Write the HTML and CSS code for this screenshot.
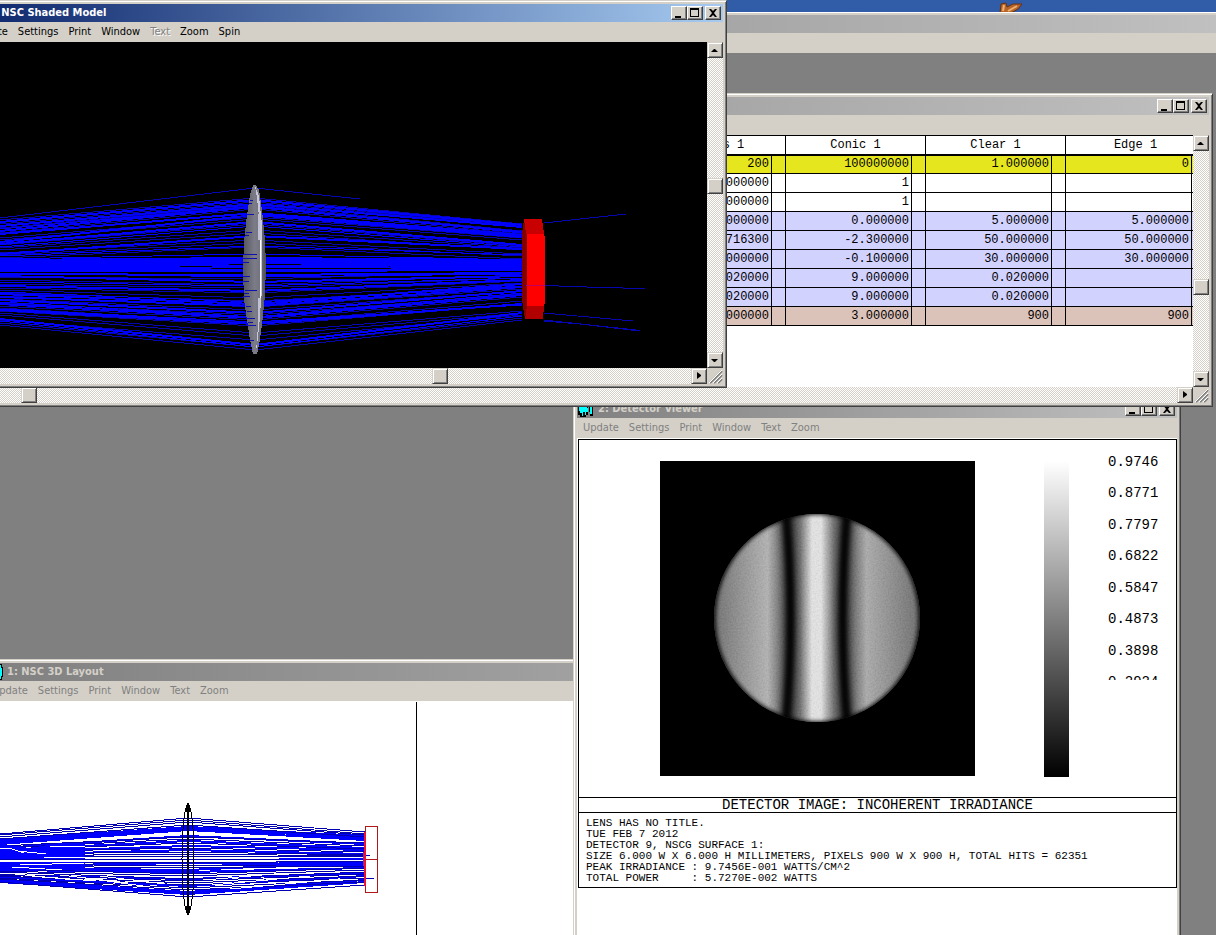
FILE: index.html
```
<!DOCTYPE html>
<html lang="en">
<head>
<meta charset="utf-8">
<title>NSC Shaded Model</title>
<link rel="stylesheet" href="styles.css">
</head>
<body>
<svg class="pointer" viewBox="0 0 24 11" width="24" height="11">
  <path d="M1 12L2 3L7 2L8 6L14 3L23 3L19 8L12 12Z" fill="#b5652a" stroke="#6b3010"/>
  <path d="M4 10L5 4M9 10L18 5" stroke="#f0b070" stroke-width="2" fill="none"/>
</svg>

<div class="app">
  <div class="titlebar idle"></div>
  <div class="menubar"></div>
</div>

<!-- 1: layout -->
<section class="window layout">
  <div class="titlebar idle">
    <svg class="icon" viewBox="0 0 16 16" width="16" height="16"><path d="M1 0H15V3H16V13H15V16H1Z" fill="#000"/><path d="M2 1H14V4H15V12H14V15H2Z" fill="#0ff"/></svg>
    <h2>1: NSC 3D Layout</h2>
  </div>
  <nav class="menubar off"><button>Update</button><button>Settings</button><button>Print</button><button>Window</button><button>Text</button><button>Zoom</button></nav>
  <svg class="paper" viewBox="-14 701 1158 234" width="1158" height="234" shape-rendering="crispEdges" fill="none">
    <path stroke="#00f" stroke-width="2" d="M0 842L188 828L365 838M0 844L188 830L365 840M0 848L188 836L365 844M0 850L188 841L365 848M0 852L188 846L365 850M0 866L188 863L365 864M0 868L188 870L365 862M0 870L188 872L365 868M0 875L188 879L365 873M0 877L188 886L365 876M0 880L188 892L365 880M0 882L188 894L365 882M0 840L188 827L365 836M0 855L188 850L365 854"/>
    <path stroke="#0000b0" d="M0 834L188 818L365 832M0 835L188 820L365 834M0 837L188 822L365 835M0 839L188 825L365 837M0 846L188 837L365 843M0 848L188 839L365 846M0 850L188 843L365 849M0 852L188 848L365 852M0 854L188 852L365 855M0 856L188 854L365 856M0 857L188 856L365 857M0 859L188 859L365 859M0 862L188 863L365 861M0 864L188 866L365 864M0 866L188 868L365 866M0 869L188 874L365 868M0 871L188 876L365 870M0 872L188 879L365 872M0 874L188 881L365 874M0 875L188 883L365 876M0 876L188 885L365 878M0 878L188 888L365 880M0 879L188 890L365 882M0 882L188 897L365 885M352 855H370M365 878H374"/>
    <path fill="#00f" d="M0 844L30 848L60 843L85 843V859H0ZM0 862H85V868L60 870H0ZM279 858H365V860H279ZM279 862H365V866H279ZM222 863H335V865H222Z"/>
    <path stroke="#fff" d="M0 848L12 849L24 853M18 851L46 854M44 857H85M50 846H85M2 861H85M20 865L85 863M12 867L62 870M15 874L75 880M32 876L96 881M60 875L128 883M85 878L150 887M100 876L165 884M205 880L285 873M212 885L310 876M230 889L340 879"/>
    <ellipse cx="188" cy="859" rx="6" ry="54" stroke="#000"/>
    <path stroke="#000" stroke-width="2" d="M188 803V915"/>
    <path stroke="#000" stroke-width="4" d="M188 805V812M188 906V913"/>
    <path stroke="#b01818" d="M365.500 826.500H377.500V892.500H365.500ZM365.500 859.500H377.500"/>
    <path stroke="#f01030" stroke-width="2" d="M365 832V886"/>
    <path stroke="#803090" d="M363.500 852V866"/>
    <path stroke="#000" d="M416.500 702V935"/>
  </svg>
</section>

<!-- 2: detector viewer -->
<section class="window detector">
  <div class="titlebar idle">
    <svg class="icon" viewBox="0 0 16 16" width="16" height="16"><path d="M0 1H10V14H8V16H2V14H0ZM11 1H15V15H12V11H11Z" fill="#000"/><path d="M1 2H9V7H10V11H8V14H7V11H5V15H4V12H2V10H1ZM12 2H14V13H12Z" fill="#0ff"/></svg>
    <h2>2: Detector Viewer</h2>
    <button class="cap" aria-label="Minimize"><svg viewBox="0 0 14 12"><path d="M3 9H9V11H3Z"/></svg></button>
    <button class="cap" aria-label="Maximize"><svg viewBox="0 0 14 12"><path fill-rule="evenodd" d="M2 1H11V10H2ZM3 3H10V9H3Z"/></svg></button>
    <button class="cap close" aria-label="Close"><svg viewBox="0 0 14 12"><path d="M3 2H5L7 4L9 2H11L8 6L11 10H9L7 8L5 10H3L6 6Z"/></svg></button>
  </div>
  <nav class="menubar off"><button>Update</button><button>Settings</button><button>Print</button><button>Window</button><button>Text</button><button>Zoom</button></nav>
  <div class="report">
    <div class="sheet">
      <div class="plot">
        <svg class="image" viewBox="660 461 315 315" width="315" height="315">
          <defs>
            <clipPath id="disc"><ellipse cx="817" cy="618" rx="103" ry="104"/></clipPath>
            <linearGradient id="beam" gradientUnits="userSpaceOnUse" x1="714" x2="920" y1="0" y2="0">
              <stop offset="0" stop-color="#686868"/><stop offset=".26" stop-color="#b0b0b0"/>
              <stop offset=".37" stop-color="#303030"/><stop offset=".42" stop-color="#686868"/>
              <stop offset=".475" stop-color="#e6e6e6"/><stop offset=".52" stop-color="#e6e6e6"/>
              <stop offset=".58" stop-color="#686868"/><stop offset=".63" stop-color="#303030"/>
              <stop offset=".74" stop-color="#a8a8a8"/><stop offset="1" stop-color="#646464"/>
            </linearGradient>
            <filter id="soft" x="-100%" width="300%"><feGaussianBlur stdDeviation="4 1"/></filter>
            <filter id="core" x="-100%" width="300%"><feGaussianBlur stdDeviation="2 1"/></filter>
            <filter id="rim"><feGaussianBlur stdDeviation="2"/></filter>
            <filter id="grain"><feTurbulence type="fractalNoise" baseFrequency=".6" numOctaves="2"/><feColorMatrix values="1 0 0 0 0 1 0 0 0 0 1 0 0 0 0 0 0 0 0 .16"/></filter>
          </defs>
          <rect x="660" y="461" width="315" height="315"/>
          <g clip-path="url(#disc)">
            <rect x="714" y="514" width="206" height="208" fill="url(#beam)"/>
            <rect x="714" y="514" width="206" height="208" filter="url(#grain)"/>
            <g fill="none" stroke="#000" stroke-width="8" filter="url(#soft)">
              <path d="M785 505Q796 618 785 731"/><path d="M848 505Q837 618 848 731"/>
            </g>
            <g fill="none" stroke="#000" stroke-width="5" filter="url(#core)">
              <path d="M785 505Q796 618 785 731"/><path d="M848 505Q837 618 848 731"/>
            </g>
            <ellipse cx="817" cy="618" rx="104" ry="106" fill="none" stroke="#000" stroke-width="5" filter="url(#rim)"/>
          </g>
        </svg>
        <div class="scale"></div>
        <ol class="levels"><li>0.9746<li>0.8771<li>0.7797<li>0.6822<li>0.5847<li>0.4873<li>0.3898<li>0.2924</ol>
      </div>
      <h3>DETECTOR IMAGE: INCOHERENT IRRADIANCE</h3>
<pre>LENS HAS NO TITLE.
TUE FEB 7 2012
DETECTOR 9, NSCG SURFACE 1:
SIZE 6.000 W X 6.000 H MILLIMETERS, PIXELS 900 W X 900 H, TOTAL HITS = 62351
PEAK IRRADIANCE : 9.7456E-001 WATTS/CM^2
TOTAL POWER     : 5.7270E-002 WATTS</pre>
    </div>
  </div>
</section>

<!-- component editor -->
<section class="window editor">
  <div class="titlebar idle">
    <h2></h2>
    <button class="cap" aria-label="Minimize"><svg viewBox="0 0 14 12"><path d="M3 9H9V11H3Z"/></svg></button>
    <button class="cap" aria-label="Maximize"><svg viewBox="0 0 14 12"><path fill-rule="evenodd" d="M2 1H11V10H2ZM3 3H10V9H3Z"/></svg></button>
    <button class="cap close" aria-label="Close"><svg viewBox="0 0 14 12"><path d="M3 2H5L7 4L9 2H11L8 6L11 10H9L7 8L5 10H3L6 6Z"/></svg></button>
  </div>
  <div class="menubar"></div>
  <div class="scroller">
    <div class="grid">
      <table>
        <colgroup><col class="num"><col class="flag"><col class="num"><col class="flag"><col class="num"><col class="flag"><col class="num"><col class="flag"></colgroup>
        <thead><tr><th colspan="2">Radius 1</th><th colspan="2">Conic 1</th><th colspan="2">Clear 1</th><th colspan="2">Edge 1</th></tr></thead>
        <tbody>
        <tr class="yellow"><td>200</td><td></td><td>100000000</td><td></td><td>1.000000</td><td></td><td>0</td><td></td></tr>
        <tr><td>0.000000</td><td></td><td>1</td><td></td><td></td><td></td><td></td><td></td></tr>
        <tr><td>0.000000</td><td></td><td>1</td><td></td><td></td><td></td><td></td><td></td></tr>
        <tr class="blue"><td>0.000000</td><td></td><td>0.000000</td><td></td><td>5.000000</td><td></td><td>5.000000</td><td></td></tr>
        <tr class="blue"><td>0.716300</td><td></td><td>-2.300000</td><td></td><td>50.000000</td><td></td><td>50.000000</td><td></td></tr>
        <tr class="blue"><td>0.000000</td><td></td><td>-0.100000</td><td></td><td>30.000000</td><td></td><td>30.000000</td><td></td></tr>
        <tr class="blue"><td>0.020000</td><td></td><td>9.000000</td><td></td><td>0.020000</td><td></td><td></td><td></td></tr>
        <tr class="blue"><td>0.020000</td><td></td><td>9.000000</td><td></td><td>0.020000</td><td></td><td></td><td></td></tr>
        <tr class="rose"><td>0.000000</td><td></td><td>3.000000</td><td></td><td>900</td><td></td><td>900</td><td></td></tr>
        </tbody>
      </table>
    </div>
    <div class="bar down">
      <button aria-label="Scroll up"><svg viewBox="0 0 14 14"><path d="M3 9H10L7 6H6Z"/></svg></button><i class="thumb"></i>
      <button aria-label="Scroll down"><svg viewBox="0 0 14 14"><path d="M3 6H10L7 9H6Z"/></svg></button>
    </div>
    <div class="bar across">
      <button aria-label="Scroll left"><svg viewBox="0 0 14 14"><path d="M8 3V10L5 7V6Z"/></svg></button><i class="thumb"></i>
      <button aria-label="Scroll right"><svg viewBox="0 0 14 14"><path d="M5 3V10L9 7V6Z"/></svg></button>
    </div>
    <svg class="grip" viewBox="0 0 16 16" width="16" height="16"><path d="M3 15L15 3M7 15L15 7M11 15L15 11" stroke="#808080" stroke-width="2"/><path d="M2 15L15 2M6 15L15 6M10 15L15 10" stroke="#fff"/></svg>
  </div>
</section>

<!-- 3: shaded model -->
<section class="window shaded">
  <div class="titlebar">
    <svg class="icon" viewBox="0 0 16 16" width="16" height="16"><path d="M1 1H15V15H1Z" fill="#0ff"/></svg>
    <h2>3: NSC Shaded Model</h2>
    <button class="cap" aria-label="Minimize"><svg viewBox="0 0 14 12"><path d="M3 9H9V11H3Z"/></svg></button>
    <button class="cap" aria-label="Maximize"><svg viewBox="0 0 14 12"><path fill-rule="evenodd" d="M2 1H11V10H2ZM3 3H10V9H3Z"/></svg></button>
    <button class="cap close" aria-label="Close"><svg viewBox="0 0 14 12"><path d="M3 2H5L7 4L9 2H11L8 6L11 10H9L7 8L5 10H3L6 6Z"/></svg></button>
  </div>
  <nav class="menubar"><button>Update</button><button>Settings</button><button>Print</button><button>Window</button><button disabled>Text</button><button>Zoom</button><button>Spin</button></nav>
  <div class="scroller">
    <svg class="scene" viewBox="-34 42 741 326" width="741" height="326" shape-rendering="crispEdges" fill="none">
      <defs>
        <linearGradient id="glass"><stop offset="0" stop-color="#55555f"/><stop offset=".5" stop-color="#7c7c88"/><stop offset=".75" stop-color="#747480"/><stop offset="1" stop-color="#4c4c54"/></linearGradient>
      </defs>
      <path stroke="#0606b0" stroke-width="1" d="M0 218L255 188L360 199M0 220L255 198L522 224M0 224L255 202L522 226M0 228L255 205L522 231M0 233L255 209L522 234M0 238L255 217L522 238M0 240L255 219L522 240M0 245L255 224L522 246M0 248L255 230L522 248M0 250L255 233L522 250M0 253L255 240L522 254M0 255L255 243L522 256M0 258L255 247L522 259M0 277L255 279L522 272M0 280L255 285L522 275M0 284L255 288L522 278M0 288L255 293L522 281M0 290L255 298L522 283M0 293L255 301L522 287M0 296L255 307L522 289M0 299L255 310L522 291M0 303L255 315L522 294M0 306L255 320L522 297M0 308L255 323L522 301M0 311L255 326L522 304M0 313L255 333L522 311M0 315L255 336L522 313M0 320L255 340L522 315M0 323L255 347L522 318M0 325L255 350L522 320M544 223L626 214M544 313L633 321M544 320L636 330"/>
      <path stroke="#00f" stroke-width="2" d="M0 222L255 200L522 225M0 226L255 204L522 227M0 231L255 207L522 232M0 234L255 213L522 235M0 242L255 215L522 237M0 244L255 222L522 245M0 254L255 236L522 249M0 260L255 258L522 260M0 262L255 259L522 261M0 264L255 260L522 262M0 266L255 261L522 264M0 268L255 263L522 266M0 270L255 267L522 268M0 271L255 271L522 270M0 274L255 275L522 273M0 276L255 282L522 276M0 286L255 291L522 280M0 294L255 304L522 284M0 297L255 306L522 287M0 300L255 313L522 291M0 304L255 318L522 295M0 310L255 324L522 304M0 319L255 345L522 313"/>
      <path stroke="#00f" stroke-width="1" d="M0 229L255 206L522 233M0 247L255 226L522 247M0 256L255 246L522 255M0 259L255 254L522 260M0 267L255 265L522 267M0 272L255 269L522 271M0 273L255 277L522 274M0 282L255 286L522 278M0 292L255 302L522 286M0 302L255 317L522 293M0 309L255 322L522 305M0 321L255 347L522 316"/>
      <path fill="#00f" d="M0 261L70 260L180 262V271L80 272L0 271Z"/>
      <path fill="url(#glass)" d="M253 185H256L259 190L262 210L265 240L266 265L265 295L262 325L259 345L257 354H253L250 340L247 320L244 300L243 270L244 242L247 215L250 195Z"/>
      <path fill="#c8c8d8" d="M255 186L259 196L262 225V290L258 338L256 352L260 300V225L257 198Z"/>
      <path stroke="#fff" d="M260.500 240V298"/>
      <path stroke="#c0c0d4" stroke-width="2" d="M259 214V240M259 298V322"/>
      <path stroke="#1010b0" d="M250 200H253M249 203H252M247 214H254M246 232H252M245 235H249M243 254H257M243 258H257M243 262H249M243 276H250M243 281H249M245 290H257M244 293H249M243 296H250M246 306H251M247 311H252M247 318H255M248 322H253M247 325H256M250 340H254"/>
      <path fill="#800000" d="M524 219L522 234V300L525 319H528V219Z"/>
      <path fill="#c80000" d="M524 219H542L544 234H526Z"/>
      <path fill="#f00" d="M527 234H544L545 238V302L544 306H527Z"/>
      <path fill="#b00000" d="M527 306H544L543 319H525Z"/>
      <path stroke="#0606b0" d="M525 285.500H544L573 286.500L600 287.500L645 288.500M544 321L580 324L640 331"/>
      <path stroke="#c00060" d="M526 285.500H545"/>
    </svg>
    <div class="bar down">
      <button aria-label="Scroll up"><svg viewBox="0 0 14 14"><path d="M3 9H10L7 6H6Z"/></svg></button><i class="thumb"></i>
      <button aria-label="Scroll down"><svg viewBox="0 0 14 14"><path d="M3 6H10L7 9H6Z"/></svg></button>
    </div>
    <div class="bar across">
      <button aria-label="Scroll left"><svg viewBox="0 0 14 14"><path d="M8 3V10L5 7V6Z"/></svg></button><i class="thumb"></i>
      <button aria-label="Scroll right"><svg viewBox="0 0 14 14"><path d="M5 3V10L9 7V6Z"/></svg></button>
    </div>
    <svg class="grip" viewBox="0 0 16 16" width="16" height="16"><path d="M3 15L15 3M7 15L15 7M11 15L15 11" stroke="#808080" stroke-width="2"/><path d="M2 15L15 2M6 15L15 6M10 15L15 10" stroke="#fff"/></svg>
  </div>
</section>
</body>
</html>
```
FILE: styles.css
```
*           {box-sizing:border-box;}
html        {height:100%;overflow:hidden;}
body        {position:relative;height:100%;margin:0;padding-top:12px;overflow:hidden;background:#305ca8;color:#000;font:11px/14px "DejaVu Sans Condensed","Noto Sans",sans-serif;}
svg         {display:block;}
h2,h3,pre,ol{margin:0;padding:0;}
button      {margin:0;padding:0;border:0;background:none;color:inherit;font:inherit;}

.pointer    {position:absolute;left:999px;top:1px;}
.app        {height:100%;padding-top:2px;background:#808080;border-top:1px solid #fff;box-shadow:inset 0 2px #d4d0c8;}

/* windows on the desktop */
.window     {position:absolute;display:flex;flex-direction:column;padding:3px;background:#d4d0c8;border:1px solid;border-color:#d4d0c8 #404040 #404040 #d4d0c8;box-shadow:inset 1px 1px #fff,inset -1px -1px #808080;}
.layout     {left:-18px;top:659px;}
.detector   {left:573px;top:396px;bottom:-20px;width:608px;}
.editor     {left:-40px;right:3px;top:93px;}
.shaded     {left:-38px;top:0;}

.titlebar   {display:flex;align-items:center;flex:none;height:18px;padding:0 2px 0 1px;background:linear-gradient(90deg,#0a246a,#a6caf0);color:#fff;}
.titlebar h2{flex:1;padding-left:4px;font:bold 11px/14px "DejaVu Sans Condensed","Noto Sans",sans-serif;white-space:nowrap;}
.idle       {background:linear-gradient(90deg,#808080,#c0c0c0);color:#d4d0c8;}
.icon       {flex:none;}
.cap        {width:16px;height:14px;background:#d4d0c8;border:1px solid;border-color:#fff #404040 #404040 #fff;box-shadow:inset -1px -1px #808080;}
.close      {margin-left:2px;}

.menubar    {display:flex;flex:none;gap:10px;height:20px;padding:0 6px;background:#d4d0c8;}
.off        {color:#808080;}
.menubar button:disabled {color:#808080;text-shadow:1px 1px #fff;}

/* scroll bars */
.scroller   {display:grid;grid-template-columns:1fr 16px;grid-template-rows:auto 16px;}
.bar        {display:flex;justify-content:space-between;background:repeating-conic-gradient(#fff 0 25%,#d4d0c8 0 50%) 0 0/2px 2px;}
.down       {flex-direction:column;}
.bar button,
.thumb      {flex:none;width:16px;height:16px;background:#d4d0c8;border:1px solid;border-color:#d4d0c8 #404040 #404040 #d4d0c8;box-shadow:inset 1px 1px #fff,inset -1px -1px #808080;}
.thumb      {margin:0 auto auto 0;}
.shaded .down .thumb   {margin-top:120px;}
.shaded .across .thumb {margin-left:450px;}
.editor .down .thumb   {margin-top:128px;}
.editor .across .thumb {margin-left:41px;}

.grid       {display:flex;justify-content:flex-end;align-items:flex-start;height:252px;overflow:hidden;background:#fff;}
table       {flex:none;width:561px;margin-right:-13px;table-layout:fixed;border-collapse:collapse;font:12px/16px "Liberation Mono",monospace;}
.num        {width:126px;}
.flag       {width:14px;}
th,td       {height:19px;padding:0 2px;border:1px solid #000;text-align:right;}
th          {font-weight:normal;text-align:center;border-bottom-width:2px;}
.yellow     {background:#e6e61e;}
.blue       {background:#d2d2ff;}
.rose       {background:#dcc3ba;}

.paper      {background:#fff;}
.scene      {background:#000;}

.report     {flex:1;padding:1px 0 0 1px;background:#fff;}
.sheet      {border:1px solid #000;}
.plot       {display:flex;height:357px;padding:21px 0 0 81px;}
.scale      {width:25px;height:316px;margin-left:69px;background:linear-gradient(#fff,#000);}
.levels     {height:226px;margin:-7px 0 0 39px;overflow:hidden;list-style:none;font:14px/16px "Liberation Mono",monospace;}
.levels li  {height:31px;}
.levels li:nth-child(even) {height:32px;}
.sheet h3   {height:16px;border:solid #000;border-width:1px 0;font:14px/14px "Liberation Mono",monospace;text-align:center;}
pre         {padding:5px 7px 3px;font:11px/11px "Liberation Mono",monospace;}
```
